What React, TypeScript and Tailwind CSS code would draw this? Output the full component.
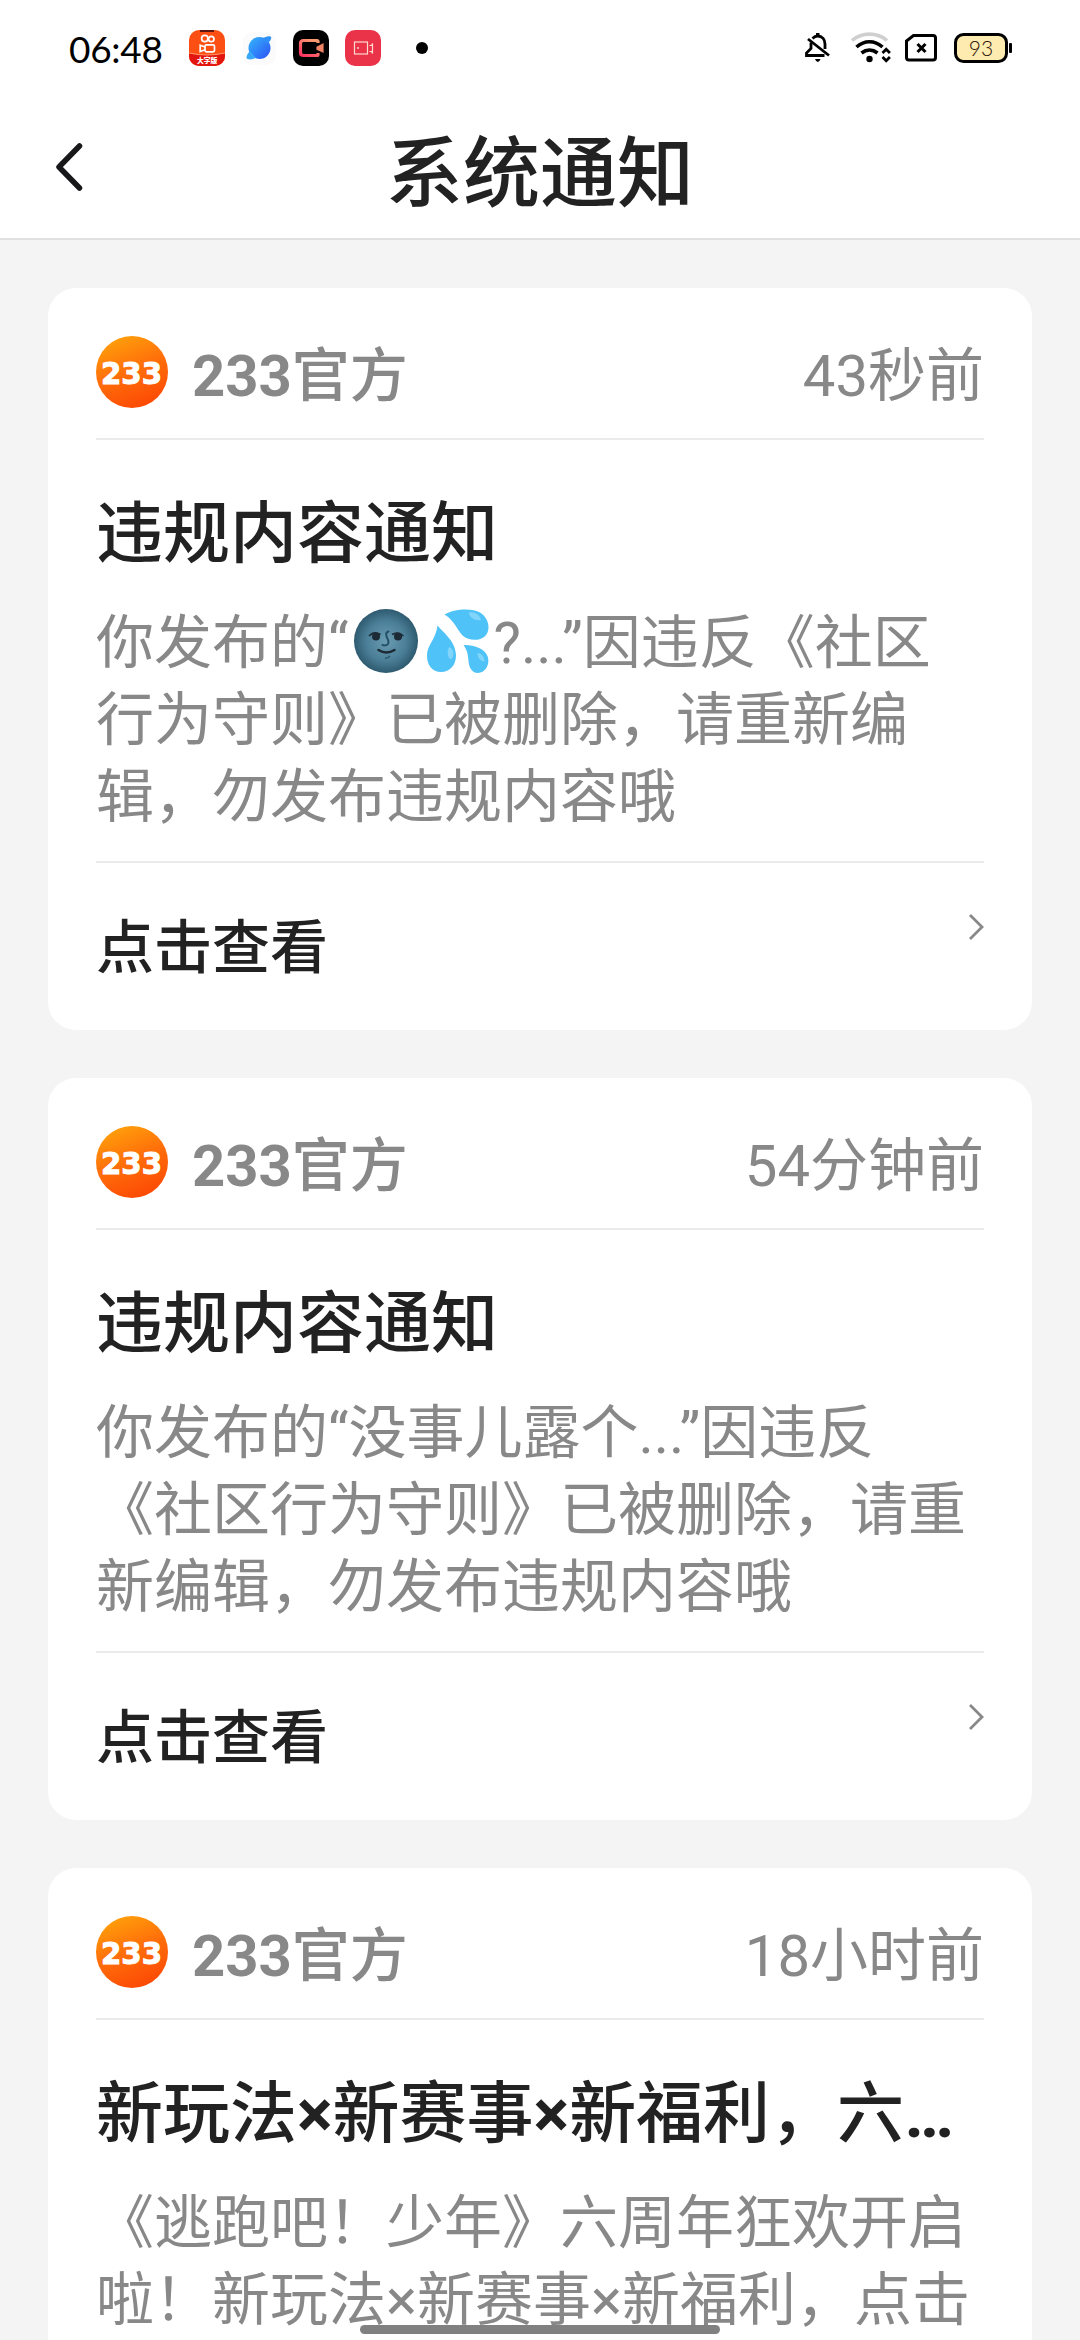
import type { ReactNode } from "react";

type Notice = {
  time: string;
  title: ReactNode;
  lines: ReactNode[];
};

function NewMoonFace() {
  return (
    <svg role="img" aria-label="🌚" viewBox="0 0 64 64" className="ml-[5px] inline-block size-16 align-[-10px]">
      <defs>
        <radialGradient id="moon" cx="0.5" cy="0.5" r="0.52">
          <stop offset="0" stopColor="#6a9db3" />
          <stop offset="0.6" stopColor="#4b7f97" />
          <stop offset="1" stopColor="#2b566b" />
        </radialGradient>
      </defs>
      <circle cx="32" cy="32" r="32" fill="url(#moon)" />
      <circle cx="22" cy="27.500" r="4" fill="#1c2b35" />
      <circle cx="44" cy="27.500" r="4" fill="#1c2b35" />
      <path d="M15 27q5-5.500 11.500-1.500M38 25.500q6-3.500 11.500 1.500" fill="none" stroke="#1c2b35" strokeWidth="1.600" />
      <path d="M34.500 22.500c-4 1-2 5-.5 8.500s-.5 6.500-5.500 5" fill="none" stroke="#24506a" strokeWidth="2" strokeLinecap="round" />
      <path d="M24.500 41q8 5 16 0" fill="none" stroke="#1c2b35" strokeWidth="2.600" strokeLinecap="round" />
      <path d="M31 49.500q3.500-.5 5-2.500" fill="none" stroke="#2b566b" strokeWidth="1.500" />
    </svg>
  );
}

function SweatDrops() {
  return (
    <svg role="img" aria-label="💦" viewBox="0 0 62 64" className="ml-[9px] inline-block h-16 w-[62px] align-[-10px]">
      <path d="M17.500 5.500C26 0 45-1.500 53 3.500c8 5 10 14 7.500 20-3 7-12 9-20 6C31 26 30 13 17.500 5.500Z" fill="#4fc3f7" />
      <path d="M10.500 16.500C17 24 29 33 29 46.500 29 56 23 63 14 63S0 56 0 46.500C0 36 9 30 10.500 16.500Z" fill="#4fc3f7" />
      <path d="M36.500 36C47 35.500 58 40 60.500 47c3 8-2 17-9.500 17-6.500 0-9-6-9.500-12-.5-7-1.500-11-5-16Z" fill="#4fc3f7" />
      <path d="M42 3.500c5-1.500 11 2 12 7.500-5 1-12-2-12-7.500ZM22 38c5 1 6 9 2 12.500-4-2-4-9-2-12.500ZM50.500 44c4 0 7 4 7 8.500-4 0-7-4-7-8.500Z" fill="#81d4fa" />
    </svg>
  );
}

const notices: Notice[] = [
  {
    time: "43秒前",
    title: "违规内容通知",
    lines: [
      <>
        你发布的“
        <NewMoonFace />
        <SweatDrops />
        <span className="ml-[5px]">?...”因违反《社区</span>
      </>,
      "行为守则》已被删除，请重新编",
      "辑，勿发布违规内容哦",
    ],
  },
  {
    time: "54分钟前",
    title: "违规内容通知",
    lines: ["你发布的“没事儿露个...”因违反", "《社区行为守则》已被删除，请重", "新编辑，勿发布违规内容哦"],
  },
  {
    time: "18小时前",
    title: (
      <>
        新玩法<b className="font-bold">×</b>新赛事<b className="font-bold">×</b>新福利，六<b className="font-bold">…</b>
      </>
    ),
    lines: ["《逃跑吧！少年》六周年狂欢开启", "啦！新玩法×新赛事×新福利，点击"],
  },
];

function Avatar() {
  return (
    <svg viewBox="0 0 72 72" className="size-[72px] shrink-0">
      <defs>
        <linearGradient id="avatar" x1="0.2" y1="0" x2="0.6" y2="1">
          <stop offset="0" stopColor="#ffa30a" />
          <stop offset="0.5" stopColor="#ff6f0a" />
          <stop offset="1" stopColor="#fc4a05" />
        </linearGradient>
      </defs>
      <circle cx="36" cy="36" r="36" fill="url(#avatar)" />
      <text
        x="5"
        y="47.500"
        fill="#fff"
        fontFamily="'DejaVu Sans', sans-serif"
        fontWeight="700"
        fontSize="31"
        textLength="61"
        lengthAdjust="spacingAndGlyphs"
        stroke="#fff"
        strokeWidth="1"
      >
        233
      </text>
    </svg>
  );
}

function AppIcons() {
  return (
    <svg viewBox="0 0 244 36" className="ml-[25px] h-9 w-[244px]">
      <defs>
        <linearGradient id="planet" x1="0" y1="0" x2="1" y2="1">
          <stop offset="0" stopColor="#35b8fb" />
          <stop offset="1" stopColor="#2b50f5" />
        </linearGradient>
        <linearGradient id="cam" x1="0" y1="1" x2="0.7" y2="0">
          <stop offset="0" stopColor="#ff2f62" />
          <stop offset="1" stopColor="#f79a72" />
        </linearGradient>
        <clipPath id="tile">
          <rect width="36" height="36" rx="10" />
        </clipPath>
      </defs>
      <g clipPath="url(#tile)">
        <rect width="36" height="36" fill="#fb4f14" />
        <path d="M0 23q18 4 36 0v13H0Z" fill="#e3160f" />
        <path d="M0 23q18 4 36 0" fill="none" stroke="#ff9a6b" strokeWidth="1" />
        <rect x="11" width="14" height="2" fill="#5c1710" />
        <g fill="none" stroke="#fff" strokeWidth="1.700">
          <circle cx="15.800" cy="8.500" r="3.200" />
          <circle cx="22.300" cy="9" r="2.700" />
          <rect x="16" y="14.800" width="9.500" height="7" rx="1.500" />
          <path d="m16 17-4.800-1.800v6.300L16 19.800" />
        </g>
        <text x="8" y="33" fill="#fff" fontFamily="'Noto Sans CJK SC', sans-serif" fontWeight="900" fontSize="6.800">
          大字版
        </text>
      </g>
      <rect x="54" y="2" width="33" height="33" rx="9" fill="#fbfbfc" />
      <circle cx="70.500" cy="18" r="11" fill="url(#planet)" />
      <path d="M59 29c-3 0-1-5 2-8l6 7c-3 1-6 2-8 1Z" fill="#39a8fb" />
      <path d="M81 6.500c3 0 0 5-2 7l-6-5c3-1 6-3 8-2Z" fill="#2f90f8" />
      <rect x="104" width="36" height="36" rx="10" fill="#000" />
      <path d="M129 13v-1.500q0-1-1-1h-13.500q-3 0-3 3v9q0 3 3 3H128q1 0 1-1V23" fill="none" stroke="url(#cam)" strokeWidth="3.200" />
      <path d="m127 16.500 8-4v11l-8-3.500Z" fill="#f18466" stroke="#000" strokeWidth="0.800" />
      <rect x="156" width="36" height="36" rx="10" fill="#ea3348" />
      <g fill="none" stroke="#ffd9d0" strokeWidth="1.200">
        <rect x="165.500" y="12" width="13" height="12" />
        <path d="M180.500 15.500h2l1-2v10l-1-2h-2" />
      </g>
      <circle cx="169" cy="18" r="1" fill="#ffd9d0" />
      <circle cx="233" cy="18" r="6" fill="#000" />
    </svg>
  );
}

function StatusIcons() {
  return (
    <svg viewBox="0 0 210 32" className="ml-auto h-8 w-[210px]">
      {/* muted bell */}
      <g fill="none" stroke="#000" strokeWidth="2.800">
        <path d="M9.500 6.500Q12 4 14.500 4c5 0 7.500 3.500 7.500 8v5" />
        <path d="M8 10.500v6l-4.500 4.500v2.500h18" />
        <path d="m5 7 21 16.500" />
      </g>
      <path d="M13 1h3.500v3H13ZM12 27h5.500q-1 3-2.700 3T12 27Z" fill="#000" />
      {/* wifi with traffic arrows */}
      <g fill="none" strokeWidth="3.600">
        <path d="M49 8.500c10-8.500 25-8.500 35 0" stroke="#cfcfcf" />
        <path d="M53.500 15c8-7 18-7 26 0" stroke="#000" />
        <path d="M58.500 21c5-4 11-4 16 0" stroke="#000" />
      </g>
      <circle cx="66.500" cy="27" r="3.200" fill="#000" />
      <path d="m79.500 21 3.700-3.700 3.700 3.700M79.500 25l3.700 3.700 3.700-3.700" fill="none" stroke="#000" strokeWidth="2.800" />
      {/* no sim */}
      <path d="M110.500 3.500H130q2.500 0 2.500 2.500v19.500q0 2.500-2.500 2.500h-24q-2.500 0-2.500-2.500V9Z" fill="none" stroke="#000" strokeWidth="3" />
      <path d="m114.500 12 8 8M122.500 12l-8 8" stroke="#000" strokeWidth="3" />
      {/* battery */}
      <rect x="152.500" y="2.500" width="51" height="27" rx="8" fill="#fdebb0" stroke="#000" strokeWidth="3" />
      <rect x="206" y="11" width="3" height="10" rx="1" fill="#000" />
      <text x="178" y="23.500" textAnchor="middle" fill="#2a0d05" fontFamily="Lato, sans-serif" fontWeight="300" fontSize="21">
        93
      </text>
    </svg>
  );
}

function NoticeCard({ time, title, lines }: Notice) {
  return (
    <article className="h-[742px] shrink-0 rounded-[28px] bg-white px-12 pt-12">
      <header className="flex h-[104px] items-start border-b-2 border-[#ebebeb] text-[58px] leading-[72px] text-[#888]">
        <Avatar />
        <span className="ml-6 pt-1 font-medium">
          <b className="font-bold">233</b>官方
        </span>
        <time className="ml-auto pt-1">{time}</time>
      </header>
      <h2 className="mt-[54px] whitespace-nowrap text-[67px] font-medium leading-[80px] text-[#222]">{title}</h2>
      <div className="mt-[31px] h-[258px] border-b-2 border-[#ebebeb] text-[58px] leading-[77px] text-[#888]">
        {lines.map((line, i) => (
          <p key={i} className="h-[77px] whitespace-nowrap">
            {line}
          </p>
        ))}
      </div>
      <footer className="flex items-start justify-between pt-[45px]">
        <span className="text-[58px] font-medium leading-[80px] text-[#222]">点击查看</span>
        <svg viewBox="0 0 16 26" className="mt-1.5 h-[26px] w-4">
          <path d="m2 1 12 12L2 25" fill="none" stroke="#888" strokeWidth="2.800" />
        </svg>
      </footer>
    </article>
  );
}

export default function App() {
  return (
    <div className="relative flex h-[2340px] w-[1080px] flex-col overflow-hidden bg-[#f4f4f4] font-[Roboto,'Noto_Sans_CJK_SC',sans-serif]">
      <div className="flex h-24 shrink-0 items-center bg-white pl-[69px] pr-[67px]">
        <span className="w-[95px] whitespace-nowrap font-[Lato,sans-serif] text-[37px] leading-none tracking-[-0.3px] text-black">
          06:48
        </span>
        <AppIcons />
        <StatusIcons />
      </div>
      <nav className="grid h-36 shrink-0 grid-cols-[120px_1fr_120px] items-center border-b-2 border-[#e0e0e0] bg-white">
        <svg viewBox="0 0 32 50" className="ml-[53px] h-[50px] w-8">
          <path d="M26.500 4 6 25l20.500 21" fill="none" stroke="#18181b" strokeWidth="5.500" strokeLinecap="round" strokeLinejoin="round" />
        </svg>
        <h1 className="pt-4 text-center text-[77px] font-medium leading-[90px] text-[#222]">系统通知</h1>
      </nav>
      <main className="flex flex-col gap-12 px-12 pt-12">
        {notices.map((notice) => (
          <NoticeCard key={notice.time} {...notice} />
        ))}
      </main>
      <div className="absolute bottom-1.5 left-[360px] h-[9px] w-[360px] rounded-full bg-[#808080]" />
    </div>
  );
}
